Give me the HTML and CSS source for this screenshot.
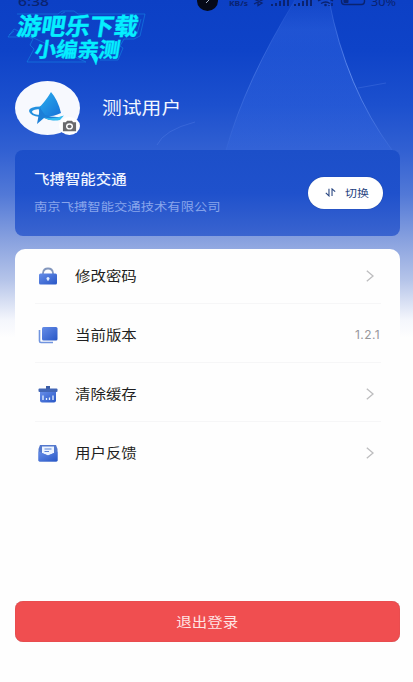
FILE: index.html
```html
<!DOCTYPE html>
<html lang="zh-CN">
<head>
<meta charset="utf-8">
<meta name="viewport" content="width=device-width, initial-scale=1">
<title>个人中心</title>
<link rel="stylesheet" href="styles.css">
</head>
<body>
<main class="screen">
  <svg class="backdrop" viewBox="0 0 413 350" aria-hidden="true">
    <defs>
      <linearGradient id="beam" x1="0" y1="0" x2="0" y2="1">
        <stop offset="0" stop-color="#4a7df0" stop-opacity=".1"/>
        <stop offset=".2" stop-color="#4a7df0" stop-opacity=".3"/>
        <stop offset="1" stop-color="#3a6eea" stop-opacity=".2"/>
      </linearGradient>
      <linearGradient id="edge" x1="0" y1="0" x2="0" y2="1">
        <stop offset="0" stop-color="#5f8df5" stop-opacity=".2"/>
        <stop offset=".5" stop-color="#7ba2f8" stop-opacity=".7"/>
        <stop offset="1" stop-color="#7ba2f8" stop-opacity=".1"/>
      </linearGradient>
    </defs>
    <path d="M295 0Q245 82 226 150H392Q346 88 329 0Z" fill="url(#beam)"/>
    <path d="M329 0Q346 88 392 150" fill="none" stroke="url(#edge)"/>
    <path d="M295 0Q245 82 226 150" fill="none" stroke="url(#edge)" stroke-width=".5"/>
    <path d="M358 88L386 83M157 145Q164 130 195 122" fill="none" stroke="#6d96f3" stroke-opacity=".35" stroke-width=".7"/>
  </svg>

  <svg class="status" viewBox="0 0 413 14" aria-label="状态栏">
    <text x="18" y="6" font-size="13" font-weight="500" textLength="31" lengthAdjust="spacingAndGlyphs">6:38</text>
    <ellipse cx="207.500" cy="1" rx="10.500" ry="10" fill="#060a18"/>
    <path d="M206 3l3-3" stroke="#a8b4c8" stroke-width="1"/>
    <text x="229" y="6" font-size="7" font-weight="700" textLength="19" lengthAdjust="spacingAndGlyphs">KB/s</text>
    <path d="M254-1l8 4-4 2.500V-2l4 2-8 4" fill="none" stroke="#0a2370" stroke-width="1.300"/>
    <path d="M272 6V4M276 6V3M280 6V1M284 6V-1M288 6V-3M295 6V4M299 6V3M303 6V1M307 6V-1M311 6V-3" stroke="#0a2370" stroke-width="2"/>
    <path d="M318 1q8-5 15 0M321 3.500q5-3 9 0M332 3v3M329 6v-1" fill="none" stroke="#0a2370" stroke-width="1.400"/>
    <circle cx="325.500" cy="5" r="1.300"/>
    <rect x="341.500" y="-6" width="23" height="10.500" rx="3" fill="none" stroke="#0a2370" stroke-width="1.400"/>
    <rect x="343.500" y="-4" width="5" height="7" rx="1"/>
    <text x="371" y="5.500" font-size="11" textLength="25" lengthAdjust="spacingAndGlyphs">30%</text>
  </svg>

  <svg class="stamp" viewBox="0 0 150 70">
    <g fill="none" stroke="#1484e4" stroke-width=".6">
      <path d="M17 14H58L62 11H74L78 14H145L140 36L134 39H124L120 46L123 48L118 60H100M86 62H27L34 49L30 45L33 39L28 37H8L14 29Z"/>
      <path d="M61 14L65 12M141 19L137 34M9 35L14 31"/>
    </g>
    <g fill="#05efff" stroke="#05efff" stroke-width=".4">
      <text transform="translate(16 35) skewX(-9)" font-size="24" textLength="121" lengthAdjust="spacingAndGlyphs">游吧乐下载</text>
      <text transform="translate(34 57) skewX(-9)" font-size="20.500" textLength="85" lengthAdjust="spacingAndGlyphs">小编亲测</text>
      <path d="M91 54L96 65L98 58L95 54Z"/>
    </g>
  </svg>

  <header class="profile">
    <div class="avatar">
      <svg viewBox="0 0 65 54" aria-hidden="true">
        <defs>
          <linearGradient id="sail" x1="0" y1="0" x2="1" y2="1">
            <stop offset="0" stop-color="#2bb0ee"/><stop offset="1" stop-color="#1671d8"/>
          </linearGradient>
        </defs>
        <path d="M36 11Q30 21 23.500 27L25 35Q36 37 46 32Q43 19 36 11Z" fill="url(#sail)"/>
        <path d="M26 25.500Q14 25.500 14 30Q15 35 25 36L24 34Q17 33 17 30.500Q18 28 26 28Z" fill="#2390df"/>
        <path d="M25 27L22 43L29 37Q40 42 48 35.500Q39 37 30 34Z" fill="#1c7fd7"/>
        <path d="M29 36.500Q39 38.500 49 34.500L45 39Q36 41 29 36.500Z" fill="#35bdf0"/>
      </svg>
      <span class="camera">
        <svg viewBox="0 0 16 12" aria-hidden="true">
          <path d="M1 2H4L5.500 .5H10.500L12 2H15V11.500H1Z" fill="#6b6b6d"/>
          <ellipse cx="8" cy="6.500" rx="3" ry="2.600" fill="none" stroke="#fff" stroke-width="1.500"/>
        </svg>
      </span>
    </div>
    <h1 class="name"><span class="wide">测试用户</span></h1>
  </header>

  <section class="company">
    <div class="company-text">
      <h2><span class="wide">飞搏智能交通</span></h2>
      <p><span class="wide">南京飞搏智能交通技术有限公司</span></p>
    </div>
    <button class="switch">
      <svg viewBox="0 0 12 10" aria-hidden="true"><path d="M4.300 .8V8.800L.8 5.500M7.700 9V1L11.200 4" fill="none" stroke="#24427e" stroke-width="1.200"/></svg>
      <span class="wide">切换</span>
    </button>
  </section>

  <ul class="menu">
    <li>
      <svg class="icon" viewBox="0 0 20 18" aria-hidden="true">
        <defs><linearGradient id="blue" x1="0" y1="0" x2="1" y2="1"><stop offset="0" stop-color="#668de8"/><stop offset="1" stop-color="#2857c6"/></linearGradient></defs>
        <path d="M5 8V6Q5.500 1.500 10 1.500T15 6V8" fill="none" stroke="#8296bd" stroke-width="1.800"/>
        <rect x="1" y="6.500" width="18" height="11" rx="1.500" fill="url(#blue)"/>
        <circle cx="10" cy="11.500" r="1.500" fill="#e3efff"/><path d="M10 11V14" stroke="#e3efff"/>
      </svg>
      <span class="label"><span class="wide">修改密码</span></span>
      <svg class="chevron" viewBox="0 0 8 12" aria-hidden="true"><path d="M.8.8L7 6L.8 11.200"/></svg>
    </li>
    <li>
      <svg class="icon" viewBox="0 0 20 18" aria-hidden="true">
        <path d="M1.500 4V15Q1.500 16.500 3 16.500H15" fill="none" stroke="#7094df" stroke-width="1.600"/>
        <rect x="4" y="1" width="15.500" height="13.500" rx="1.500" fill="url(#blue)"/>
      </svg>
      <span class="label"><span class="wide">当前版本</span></span>
      <span class="version">1.2.1</span>
    </li>
    <li>
      <svg class="icon" viewBox="0 0 20 18" aria-hidden="true">
        <path d="M10 1V5" stroke="#3c5da5" stroke-width="4"/>
        <rect x=".5" y="3.500" width="19" height="3.500" rx="1" fill="#4266b6"/>
        <path d="M2 7H18V15.500Q18 17.500 16 17.500H4Q2 17.500 2 15.500Z" fill="url(#blue)"/>
        <path d="M5 15V10.500M8.500 15V13M11.500 15V12.500M15 15V10.500" stroke="#e6f1ff" stroke-width="1.300"/>
      </svg>
      <span class="label"><span class="wide">清除缓存</span></span>
      <svg class="chevron" viewBox="0 0 8 12" aria-hidden="true"><path d="M.8.8L7 6L.8 11.200"/></svg>
    </li>
    <li>
      <svg class="icon" viewBox="0 0 20 18" aria-hidden="true">
        <path d="M.5 5L2 1H18L19.500 5V16.500Q19.500 17.500 18 17.500H2Q.5 17.500 .5 16.500Z" fill="#5378cd"/>
        <path d="M4 2.500H16V9L10 11.500L4 9Z" fill="#edf4ff"/>
        <path d="M6.500 5H13.500M6.500 7.500H11" stroke="#5d83d6" stroke-width="1.200"/>
        <path d="M.5 7.500L10 11.500L19.500 7.500V16.500Q19.500 17.500 18 17.500H2Q.5 17.500 .5 16.500Z" fill="url(#blue)"/>
      </svg>
      <span class="label"><span class="wide">用户反馈</span></span>
      <svg class="chevron" viewBox="0 0 8 12" aria-hidden="true"><path d="M.8.8L7 6L.8 11.200"/></svg>
    </li>
  </ul>

  <button class="logout"><span class="wide">退出登录</span></button>
</main>
</body>
</html>
```
FILE: styles.css
```css
* { box-sizing: border-box; margin: 0; padding: 0; }

body {
  font-family: "Noto Sans CJK SC", "Noto Sans", sans-serif;
  background: #fefefe;
}

button { border: 0; font-family: inherit; }
svg { display: block; }

.screen {
  position: relative;
  display: flex;
  flex-direction: column;
  width: 413px;
  height: 682px;
  padding: 81px 13px 40px 15px;
  overflow: hidden;
  background: linear-gradient(180deg, #0c40c5 0, #0e43c8 50px, #1c50ce 105px, #3160d2 150px, #5279d7 195px, #88a1df 240px, #b5c4e9 280px, #f4f6fc 320px, #fefefe 338px);
}

.backdrop, .status, .stamp {
  position: absolute;
  top: 0;
  left: 0;
}
.backdrop { width: 413px; height: 350px; }
.status { width: 413px; height: 14px; fill: #0a2370; font-family: "Noto Sans", sans-serif; }
.stamp { width: 150px; height: 70px; font-weight: 700; }

.wide {
  display: inline-block;
  transform: scaleX(1.18);
  transform-origin: left center;
  white-space: nowrap;
}

.profile {
  position: relative;
  display: flex;
  align-items: center;
  height: 54px;
}
.avatar {
  position: relative;
  width: 65px;
  height: 54px;
  border-radius: 50%;
  background: #f7f9fe;
}
.avatar > svg { width: 65px; height: 54px; }
.camera {
  position: absolute;
  right: 0;
  bottom: 0;
  display: grid;
  place-items: center;
  width: 21px;
  height: 18px;
  border-radius: 50%;
  background: #fff;
}
.camera svg { width: 15px; height: 12px; }
.name {
  margin: 0 0 2px 22px;
  color: #f1f6ff;
  font-size: 16.8px;
  line-height: 24px;
  font-weight: 400;
}

.company {
  position: relative;
  display: flex;
  justify-content: space-between;
  height: 86px;
  margin-top: 15px;
  padding: 19px 17px 0 19px;
  border-radius: 8px;
  background: linear-gradient(180deg, #1c4fc9, #1f51cc 50%, #3a64cf);
}
.company h2 {
  color: #eef4ff;
  font-size: 13.1px;
  line-height: 19px;
  font-weight: 500;
}
.company p {
  margin-top: 10px;
  color: #88a5eb;
  font-size: 11.3px;
  line-height: 16px;
}
.switch {
  display: flex;
  align-items: center;
  gap: 9px;
  width: 75px;
  height: 32px;
  margin-top: 8px;
  padding: 0 0 1px 17px;
  border-radius: 16px;
  background: #fff;
  box-shadow: 0 0 1px #153982;
  color: #24427e;
  font-size: 10.1px;
}
.switch svg { width: 11px; height: 9px; }

.menu {
  position: relative;
  display: grid;
  grid-template-rows: 55px repeat(3, 59px);
  height: 262px;
  margin-top: 13px;
  padding: 0 19px 0 20px;
  border-radius: 10px 10px 0 0;
  background: #fefefe;
  list-style: none;
}
.menu li {
  display: flex;
  align-items: center;
  padding: 3px 6px 0 3px;
  border-bottom: 1px solid #f6f6f7;
}
.menu li:first-child { padding-top: 0; }
.menu li:last-child { border-bottom: 0; }
.icon { width: 20px; height: 18px; }
.label {
  flex: 1;
  margin: 0 0 1px 17px;
  color: #1f1f21;
  font-size: 13.1px;
}
.chevron { width: 8px; height: 12px; margin-right: 1px; fill: none; stroke: #bdbdbf; stroke-width: 1.3; }
.version {
  margin-right: -5px;
  color: #97979b;
  font-family: Inter, sans-serif;
  font-size: 12px;
  letter-spacing: .4px;
}

.logout {
  display: grid;
  place-items: center;
  height: 41px;
  margin-top: auto;
  padding-bottom: 1px;
  border-radius: 8px;
  background: #f04e50;
  box-shadow: inset 0 0 1px #a9474b;
  color: #ffe3e3;
  font-size: 13.1px;
}
.logout .wide { transform-origin: center; }
```
